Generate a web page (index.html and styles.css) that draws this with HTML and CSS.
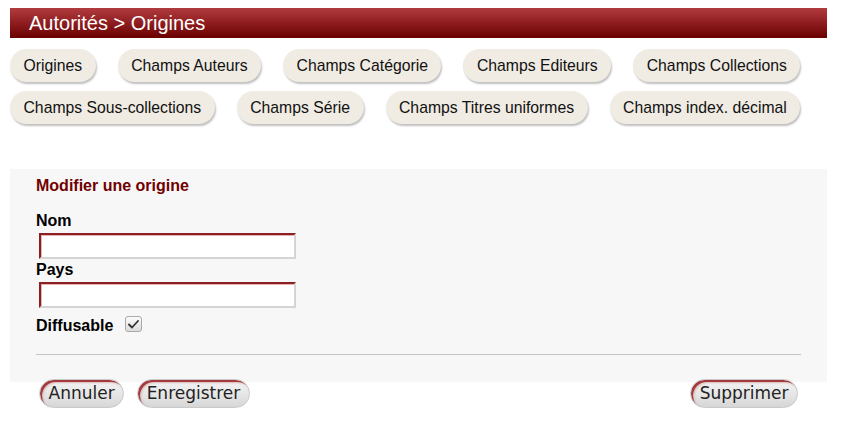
FILE: index.html
```html
<!DOCTYPE html>
<html lang="fr">
<head>
<meta charset="utf-8">
<title>Autorités &gt; Origines</title>
<link rel="stylesheet" href="styles.css">
</head>
<body>
<div class="page">
  <h1 class="title-bar">Autorités &gt; Origines</h1>
  <nav class="tabs">
    <a class="tab">Origines</a>
    <a class="tab">Champs Auteurs</a>
    <a class="tab">Champs Catégorie</a>
    <a class="tab">Champs Editeurs</a>
    <a class="tab">Champs Collections</a>
    <a class="tab">Champs Sous-collections</a>
    <a class="tab">Champs Série</a>
    <a class="tab">Champs Titres uniformes</a>
    <a class="tab">Champs index. décimal</a>
  </nav>
  <form class="panel">
    <h2 class="panel-title">Modifier une origine</h2>
    <label class="field-label">Nom</label>
    <input class="text-input" type="text">
    <label class="field-label">Pays</label>
    <input class="text-input" type="text">
    <div class="check-row">
      <span class="field-label">Diffusable</span>
      <span class="checkbox">
        <svg width="11" height="9" viewBox="0 0 11 9"><path d="M1 4.5 L4 7.5 L10 1" fill="none" stroke="#333" stroke-width="1.8" stroke-linecap="round" stroke-linejoin="round"/></svg>
      </span>
    </div>
    <hr class="separator">
  </form>
  <div class="actions">
    <div class="actions-left">
      <button class="btn" type="button">Annuler</button>
      <button class="btn" type="button">Enregistrer</button>
    </div>
    <button class="btn" type="button">Supprimer</button>
  </div>
</div>
</body>
</html>
```
FILE: styles.css
```css
html, body {
  margin: 0;
  padding: 0;
  background: #ffffff;
}

body {
  font-family: "Liberation Sans", Arial, sans-serif;
  color: #222;
}

.page {
  width: 817px;
  padding: 8px 0 0 10px;
}

.title-bar {
  margin: 0;
  height: 30px;
  line-height: 30px;
  padding-left: 19px;
  font-size: 20px;
  font-weight: normal;
  color: #fff;
  background: linear-gradient(to bottom, #b13b3e 0%, #922022 45%, #6a0000 100%);
}

.tabs {
  display: flex;
  flex-wrap: wrap;
  column-gap: 22px;
  row-gap: 9px;
  margin-top: 11px;
}

.tab {
  display: block;
  height: 33px;
  line-height: 33px;
  padding: 0 13.5px;
  font-size: 15.75px;
  color: #111;
  background: #f0ebe3;
  border-radius: 17px;
  box-shadow: 1px 2px 2px rgba(0, 0, 0, 0.25);
}

.panel {
  margin: 45px 0 0 0;
  padding: 8px 26px 0 26px;
  height: 205px;
  background: #f7f7f7;
}

.panel-title {
  margin: 0 0 17px 0;
  font-size: 16px;
  line-height: 18px;
  font-weight: bold;
  color: #700000;
}

.field-label {
  display: block;
  font-size: 16px;
  line-height: 18px;
  font-weight: bold;
  color: #000;
}

.text-input {
  display: block;
  box-sizing: border-box;
  width: 257px;
  height: 26px;
  margin: 3px 0 2px 3px;
  padding: 0;
  background: #fff;
  border-style: solid;
  border-width: 2px;
  border-color: #8c1f22 #d4d4d4 #d4d4d4 #8c1f22;
  box-shadow: inset 1px 1px 0 #e6b3b3;
  outline: none;
}

.check-row {
  display: flex;
  align-items: center;
  margin-top: 9px;
  height: 18px;
}

.checkbox {
  display: flex;
  align-items: center;
  justify-content: center;
  box-sizing: border-box;
  width: 17px;
  height: 16px;
  margin-left: 12px;
  margin-top: -4px;
  border: 1px solid #a9a9a9;
  border-radius: 3px;
  background: linear-gradient(to bottom, #fbfbfb, #dcdcdc);
}

.separator {
  margin: 19px 0 0 0;
  border: 0;
  height: 1px;
  background: #c4c4c4;
}

.actions {
  display: flex;
  justify-content: space-between;
  align-items: center;
  margin-top: -3px;
  padding: 0 29px 0 29px;
}

.actions-left {
  display: flex;
  gap: 13px;
}

.btn {
  box-sizing: border-box;
  height: 29px;
  padding: 0 8.5px;
  font-family: "DejaVu Sans", Verdana, sans-serif;
  font-size: 17px;
  line-height: 25px;
  color: #222;
  border: 1px solid #c9c9c9;
  border-radius: 15px;
  background: linear-gradient(to bottom, #f4f4f4 0%, #e4e4e4 60%, #d6d6d6 100%);
  box-shadow: inset 2px 2px 0 #a43a3c, inset 3px 3px 2px rgba(180, 80, 80, 0.35);
}
```
